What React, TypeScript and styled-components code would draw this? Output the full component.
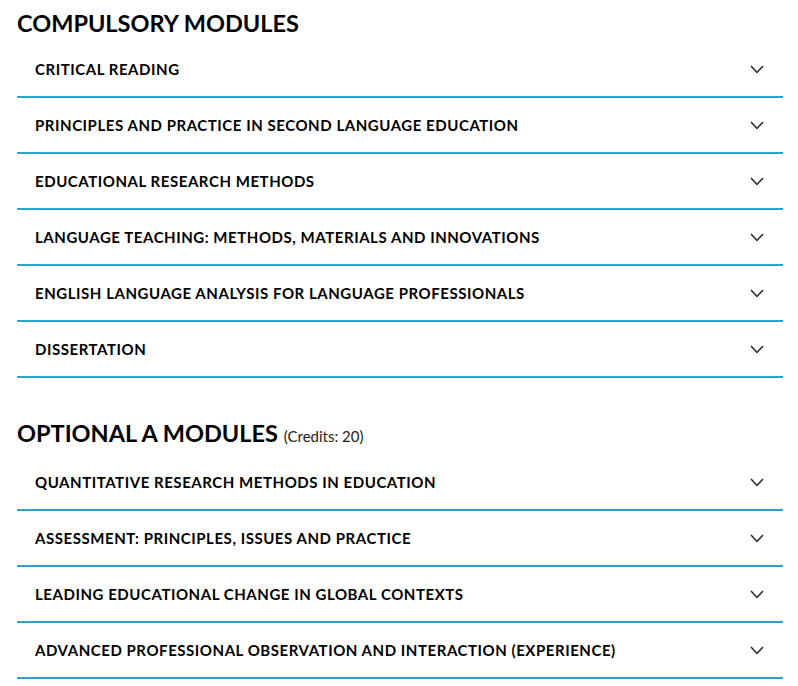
import React from "react"
import styled, { createGlobalStyle } from "styled-components"

const GlobalStyle = createGlobalStyle`
    body {
        margin: 0;
        background: #fff;
        font-family: Lato, "Noto Sans", sans-serif;
        color: #111;
    }
`

const Page = styled.div`
    width: 766px;
    padding: 0 15px 0 17px;
`

const SectionTitle = styled.h2<{first?: boolean}>`
    margin: ${({first}) => first ? '9px 0 5px' : '41px 0 5px'};
    font-size: 23.5px;
    line-height: 28px;
    font-weight: 700;
    color: #000;
    display: flex;
    align-items: baseline;
    gap: 6px;
`

const Credits = styled.span`
    font-size: 15px;
    font-weight: 400;
    color: #222;
`

const Row = styled.div`
    height: 54px;
    display: flex;
    align-items: center;
    justify-content: space-between;
    padding: 0 19px 0 18px;
    border-bottom: 2px solid #2aa3cc;
    cursor: pointer;
`

const RowTitle = styled.span`
    font-size: 15px;
    font-weight: 700;
    letter-spacing: 0.55px;
    color: #000;
`

const Chevron = () => (
    <svg width="14" height="9" viewBox="0 0 14 9" fill="none">
        <path d="M1 1l6 6.5L13 1" stroke="#222" strokeWidth="1.5" />
    </svg>
)

const compulsory = [
    "CRITICAL READING",
    "PRINCIPLES AND PRACTICE IN SECOND LANGUAGE EDUCATION",
    "EDUCATIONAL RESEARCH METHODS",
    "LANGUAGE TEACHING: METHODS, MATERIALS AND INNOVATIONS",
    "ENGLISH LANGUAGE ANALYSIS FOR LANGUAGE PROFESSIONALS",
    "DISSERTATION",
]

const optionalA = [
    "QUANTITATIVE RESEARCH METHODS IN EDUCATION",
    "ASSESSMENT: PRINCIPLES, ISSUES AND PRACTICE",
    "LEADING EDUCATIONAL CHANGE IN GLOBAL CONTEXTS",
    "ADVANCED PROFESSIONAL OBSERVATION AND INTERACTION (EXPERIENCE)",
]

const ModuleRow = ({title}: {title: string}) => (
    <Row>
        <RowTitle>{title}</RowTitle>
        <Chevron />
    </Row>
)

const App = () => {
    return (
        <Page>
            <GlobalStyle />
            <SectionTitle first>COMPULSORY MODULES</SectionTitle>
            {compulsory.map((m) => <ModuleRow key={m} title={m} />)}
            <SectionTitle>
                OPTIONAL A MODULES
                <Credits>(Credits: 20)</Credits>
            </SectionTitle>
            {optionalA.map((m) => <ModuleRow key={m} title={m} />)}
        </Page>
    )
}

export default App
